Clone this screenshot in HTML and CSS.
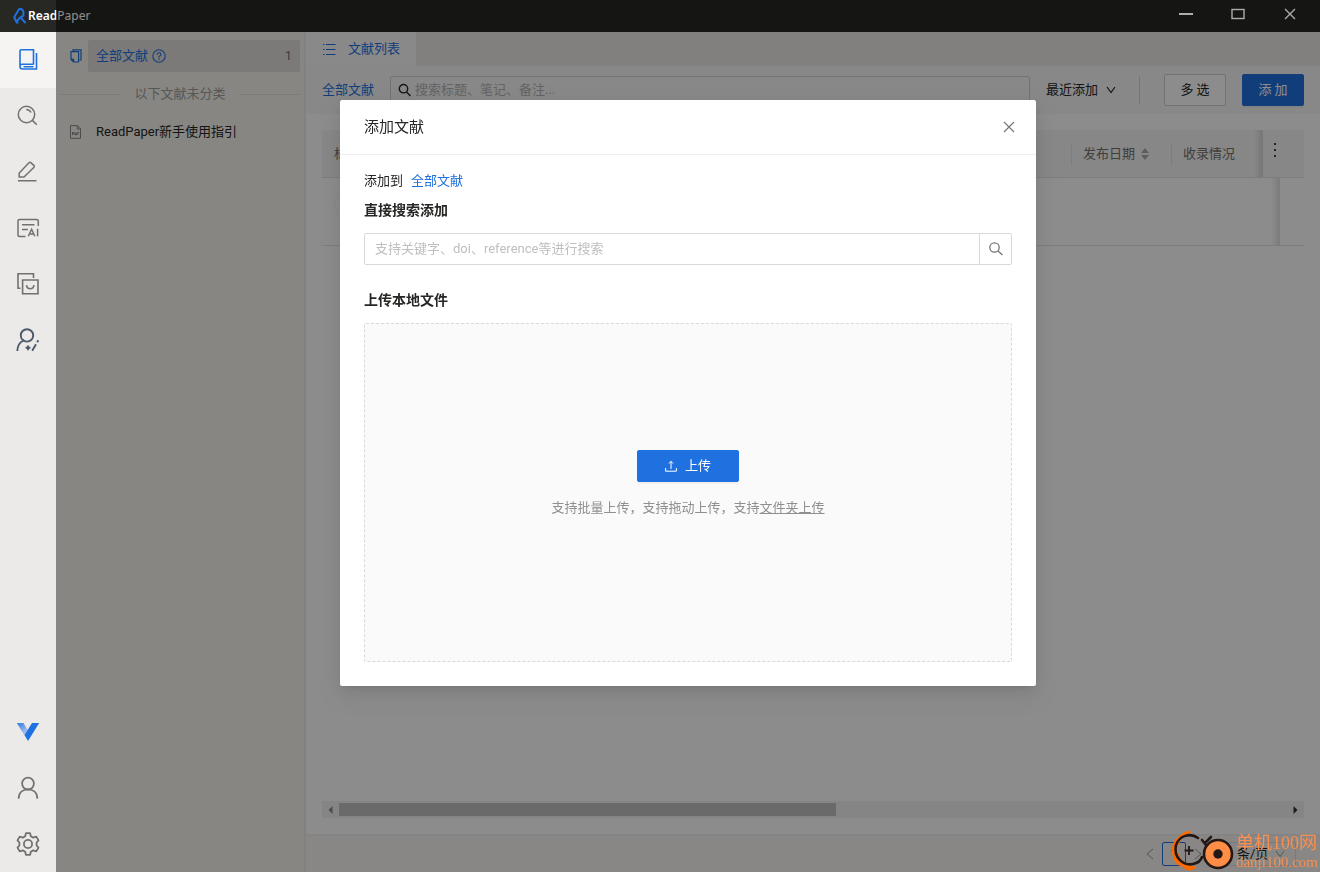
FILE: index.html
```html
<!DOCTYPE html>
<html lang="zh-CN">
<head>
<meta charset="utf-8">
<title>ReadPaper</title>
<link rel="stylesheet" href="styles.css">
</head>
<body>
<div class="app">
  <header class="titlebar">
    <div class="brand">
      <svg class="brand-mark" width="14" height="16" viewBox="0 0 14 16" fill="none" stroke="#1f71e0" stroke-width="2"><path d="M5.500 14.600H3.800L1.200 9.200 5.600 1.800Q7.300.2 9.400 1.800L10.400 3.600V7.600L6.400 10.200 3.800 13.400M6.800 8.600 12.600 15"/></svg>
      <span class="brand-name"><b>Read</b>Paper</span>
    </div>
    <div class="window-controls">
      <button type="button" aria-label="最小化"><svg width="14" height="14" viewBox="0 0 14 14"><path d="M0 7H14" stroke="currentColor" stroke-width="2"/></svg></button>
      <button type="button" aria-label="最大化"><svg width="14" height="14" viewBox="0 0 14 14"><rect x="1" y="2.500" width="12" height="9" fill="none" stroke="currentColor" stroke-width="1.400"/></svg></button>
      <button type="button" aria-label="关闭窗口"><svg width="14" height="14" viewBox="0 0 14 14"><path d="M2 2 12 12M12 2 2 12" stroke="currentColor" stroke-width="1.400"/></svg></button>
    </div>
  </header>

  <div class="workspace">
    <nav class="rail" aria-label="主导航">
      <button type="button" class="rail-item active" aria-label="文献"><svg width="24" height="24" viewBox="0 0 24 24" fill="none" stroke="currentColor" stroke-width="1.600"><path d="M17.500 16.500V1.800H5.200Q4 1.800 4 3V18.500Q4 21 6.500 21H20.500V5M4 18.500Q4 16.300 6.200 16.300H17.500M7.500 18.700H17.500"/></svg></button>
      <button type="button" class="rail-item" aria-label="搜索"><svg width="24" height="24" viewBox="0 0 24 24" fill="none" stroke="currentColor" stroke-width="1.500"><circle cx="10.500" cy="10.500" r="8.200"/><path d="M16.400 16.400 20.800 20.800M10.300 5.600Q13.600 5.700 15 8.500"/></svg></button>
      <button type="button" class="rail-item" aria-label="写作"><svg width="24" height="24" viewBox="0 0 24 24" fill="none" stroke="currentColor" stroke-width="1.500"><path d="M2 20.700H20.500M3.200 17V13L13.200 2.600Q14 1.900 14.800 2.600L18 5.600Q18.700 6.400 18 7.200L8 17Z"/></svg></button>
      <button type="button" class="rail-item" aria-label="AI 笔记"><svg width="24" height="24" viewBox="0 0 24 24" fill="none" stroke="currentColor" stroke-width="1.500"><path d="M9.500 20.500H3.500Q2 20.500 2 19V4.800Q2 3.600 3.500 3.600H20.500Q22.300 3.600 22.300 5V10M6 8.800H18.500M6 13.500H12"/><path d="M12.300 20.200 15.600 13.200 18.800 20.200M13.500 18H18M21.600 12.800V20.200"/></svg></button>
      <button type="button" class="rail-item" aria-label="收藏"><svg width="24" height="24" viewBox="0 0 24 24" fill="none" stroke="currentColor" stroke-width="1.600"><path d="M4.500 16.300H2V1.800H17.500V6M6.600 8H22V21.800H6.600ZM10.500 13.200Q11 16.800 14.200 16.800T18 13.200"/></svg></button>
      <button type="button" class="rail-item dark" aria-label="学者"><svg width="24" height="24" viewBox="0 0 24 24" fill="none" stroke="currentColor" stroke-width="1.900"><circle cx="11" cy="7.400" r="6.200"/><path d="M1.300 23Q1.600 15.200 7.600 12.500M16.200 22.700 20 16.200M21.200 14.200 22.300 12.300M12 17.400V22.200M9.600 19.800H14.400"/></svg></button>
      <span class="rail-gap"></span>
      <button type="button" class="rail-item" aria-label="会员"><svg width="24" height="24" viewBox="0 0 24 24"><defs><linearGradient id="v" x1="0" y1="0" x2=".6" y2="1"><stop offset="0" stop-color="#3079e2"/><stop offset="1" stop-color="#bfd1ee"/></linearGradient></defs><path d="M.8 3H7.500L13 12.500 9.500 17Z" fill="url(#v)"/><path d="M16 3H23.200L12 21 8.500 15Z" fill="#1f71e0"/></svg></button>
      <button type="button" class="rail-item" aria-label="账户"><svg width="24" height="24" viewBox="0 0 24 24" fill="none" stroke="currentColor" stroke-width="1.800"><circle cx="12" cy="7.600" r="5.900"/><path d="M2.600 22.600C2.800 16.300 7 13.300 12 13.300S21.200 16.300 21.400 22.600"/></svg></button>
      <button type="button" class="rail-item" aria-label="设置"><svg width="24" height="24" viewBox="0 0 24 24" fill="none" stroke="currentColor" stroke-width="1.800" stroke-linejoin="round"><path d="M9.900 1.200H14.100L14.800 4.200 17.200 5.600 20.300 4.600 22.500 8.400 20.600 10.500V13.500L22.500 15.600 20.300 19.400 17.200 18.400 14.800 19.800 14.100 22.800H9.900L9.200 19.800 6.800 18.400 3.700 19.400 1.500 15.600 3.400 13.500V10.500L1.500 8.400 3.700 4.600 6.800 5.600 9.200 4.200Z"/><circle cx="12" cy="12" r="4.100"/></svg></button>
    </nav>

    <aside class="folders">
      <div class="folder-row">
        <span class="folder-icon blue"><svg width="14" height="14" viewBox="0 0 14 14" fill="none" stroke="currentColor" stroke-width="1.200"><path d="M4 2.500V.8H12V11H10.500M2 2.600H9.600V13H4.500L2 10.500ZM2 10.300H4.600V13"/></svg></span>
        <button type="button" class="folder-all"><span>全部文献</span><svg width="14" height="14" viewBox="0 0 14 14" fill="none" stroke="currentColor" stroke-width="1.100"><circle cx="7" cy="7" r="6.200"/><path d="M5 5.500Q5 3.700 7 3.700T9 5.500Q9 6.700 7 7.400V8.600M7 9.600V10.900"/></svg><span class="count">1</span></button>
      </div>
      <div class="separator">以下文献未分类</div>
      <div class="folder-row">
        <span class="folder-icon"><svg width="14" height="14" viewBox="0 0 14 14" fill="none" stroke="currentColor"><path d="M1.500.6H8.500L11.500 3.700V13.300H1.500ZM8.300.8V4H11.500M3.500 10V7.500H5V9H3.500M6.200 7.500V10H7.200V7.500M8.800 10V7.500H10.300"/></svg></span>
        <a class="doc-link" href="#">ReadPaper新手使用指引</a>
      </div>
    </aside>

    <main class="library">
      <div class="tabs">
        <button type="button" class="tab"><svg width="14" height="14" viewBox="0 0 14 14" stroke="currentColor"><path d="M4 2.500H13.500M4 7.500H13.500M4 12.500H13.500M1 2.500H2.500M1 7.500H2.500M1 12.500H2.500"/></svg>文献列表</button>
      </div>
      <div class="toolbar">
        <a class="crumb" href="#">全部文献</a>
        <label class="filter"><svg width="14" height="14" viewBox="0 0 14 14" fill="none" stroke="currentColor" stroke-width="1.400"><circle cx="5.500" cy="5.700" r="4.200"/><path d="M8.500 9 12.500 13"/></svg><input type="text" aria-label="搜索文献" placeholder="搜索标题、笔记、备注..."></label>
        <span class="picker sort"><select aria-label="排序"><option>最近添加</option></select><svg width="10" height="10" viewBox="0 0 10 10" fill="none" stroke="currentColor" stroke-width="1.200"><path d="M1 2 5 7.500 9 2"/></svg></span>
        <span class="rule"></span>
        <button type="button" class="btn">多 选</button>
        <button type="button" class="btn primary">添 加</button>
      </div>
      <div class="list">
        <table class="papers">
          <colgroup><col><col class="w-date"><col class="w-index"><col class="w-pin"><col class="w-more"></colgroup>
          <thead><tr>
            <th>标题</th>
            <th class="lined"><span class="sortable">发布日期<svg width="8" height="12" viewBox="0 0 8 12" fill="currentColor"><path d="M4 0 8 5H0ZM0 7H8L4 12Z"/></svg></span></th>
            <th class="lined shade">收录情况</th>
            <th colspan="2" class="more"><button type="button" aria-label="列设置"><svg width="4" height="16" viewBox="0 0 4 16" fill="currentColor"><path d="M1 1H3V3H1ZM1 7H3V9H1ZM1 13H3V15H1Z"/></svg></button></th>
          </tr></thead>
          <tbody><tr><td colspan="4" class="shade"><span class="ring"></span></td><td></td></tr></tbody>
        </table>
        <div class="scrollbar">
          <span class="arrow dim"><svg width="5" height="8" viewBox="0 0 5 8"><path d="M4.500 0V8L.5 4Z" fill="currentColor"/></svg></span>
          <span class="track"><span class="thumb"></span></span>
          <span class="arrow"><svg width="5" height="8" viewBox="0 0 5 8"><path d="M.5 0V8L4.500 4Z" fill="currentColor"/></svg></span>
        </div>
      </div>
      <footer class="pager">
        <button type="button" class="page-step" aria-label="上一页"><svg width="8" height="12" viewBox="0 0 8 12" fill="none" stroke="currentColor"><path d="M7 1 1 6 7 11"/></svg></button>
        <button type="button" class="page-no">1</button>
        <button type="button" class="page-step" aria-label="下一页"><svg width="8" height="12" viewBox="0 0 8 12" fill="none" stroke="currentColor"><path d="M1 1 7 6 1 11"/></svg></button>
        <span class="picker size"><select aria-label="每页数量"><option>条/页</option></select><svg width="10" height="10" viewBox="0 0 10 10" fill="none" stroke="currentColor"><path d="M1 2 5 7.500 9 2"/></svg></span>
      </footer>
    </main>
  </div>

  <div class="mask">
    <section class="dialog" role="dialog" aria-labelledby="dialog-title">
      <header class="dialog-head">
        <h1 id="dialog-title">添加文献</h1>
        <button type="button" class="close" aria-label="关闭"><svg width="12" height="12" viewBox="0 0 12 12"><path d="M1 1 11 11M11 1 1 11" stroke="currentColor" stroke-width="1.200"/></svg></button>
      </header>
      <div class="dialog-body">
        <p class="target">添加到<a href="#">全部文献</a></p>
        <h2><label for="query">直接搜索添加</label></h2>
        <div class="search">
          <input id="query" type="text" placeholder="支持关键字、doi、reference等进行搜索">
          <button type="button" aria-label="搜索"><svg width="16" height="16" viewBox="0 0 16 16" fill="none" stroke="currentColor" stroke-width="1.300"><circle cx="6.500" cy="6.500" r="4.700"/><path d="M10 10 14.500 14"/></svg></button>
        </div>
        <h2>上传本地文件</h2>
        <div class="dropzone">
          <button type="button" class="btn primary upload"><svg width="12" height="12" viewBox="0 0 12 12" fill="none" stroke="currentColor"><path d="M.6 8V11.200H11.400V8M6 9V1.500M4 3.500 6 1.300 8 3.500"/></svg>上传</button>
          <p>支持批量上传，支持拖动上传，支持<a href="#">文件夹上传</a></p>
        </div>
      </div>
    </section>
  </div>

  <div class="watermark">
    <svg width="66" height="44" viewBox="0 0 66 44" fill="none">
      <path d="M22 4Q17 1 12 6 1 13 2 23 3 37 13 39 19 46 27 39 12 37 8 25 6 13 17 7Z" fill="#ff6a00"/>
      <path d="M28 10C20 4 9 8 6 17 3 30 14 38 23 36 28 35 31 32 32 29M32 12 36 17M41 9 36 14" stroke="#231815" stroke-width="2.600" stroke-linecap="round"/>
      <path d="M19 18V27M14.500 22.500H23.500" stroke="#231815" stroke-width="1.800"/>
      <circle cx="48" cy="26" r="14" fill="#ff8d45" stroke="#231815" stroke-width="2.600"/>
      <circle cx="48" cy="26" r="4.700" fill="#231815"/>
    </svg>
    <div class="watermark-text"><span>单机100网</span><span class="domain">danji100.com</span></div>
  </div>
</div>
</body>
</html>
```
FILE: styles.css
```css
:root {
  --blue: #1f71e0;
  --ink: #262625;
  --line: #e4e4e4;
}
* { box-sizing: border-box; }
body {
  margin: 0;
  font: 400 13px/22px Roboto, "Noto Sans CJK SC", sans-serif;
  color: var(--ink);
}
button, input, select { font: inherit; color: inherit; }
button { border: 0; padding: 0; background: none; cursor: pointer; }
a { color: var(--blue); text-decoration: none; }
h1, h2, p { margin: 0; }
svg { display: block; flex: none; }

.app { min-height: 100vh; display: flex; flex-direction: column; }

.titlebar {
  height: 32px;
  display: flex;
  justify-content: space-between;
  background: #272724;
  color: #fff;
}
.brand { display: flex; align-items: center; gap: 1px; padding-left: 13px; }
.brand-name { font: 400 12px/16px "Noto Sans", sans-serif; }
.brand-name b { font-weight: 600; }
.window-controls { display: flex; padding: 0 4px 4px 0; z-index: 3; position: relative; color: #adada9; }
.window-controls button { width: 52px; display: grid; place-items: center; }

.workspace { flex: 1; display: flex; }
.rail { width: 56px; flex: none; display: flex; flex-direction: column; background: #ebeae8; color: #73716f; }
.rail-item { height: 56px; display: grid; place-items: center; }
.rail-item.active { background: #f5f4f2; color: var(--blue); }
.rail-item.dark { color: #4e5969; }
.rail-gap { flex: 1; }

.folders {
  width: 250px;
  flex: none;
  padding: 8px 4px;
  background: #f7f4ef;
  border-right: 2px solid #eeebe7;
}
.folder-row { display: flex; align-items: center; height: 32px; }
.folder-icon { width: 28px; padding-left: 9px; color: #8b8987; }
.folder-icon.blue { color: var(--blue); }
.folder-all {
  flex: 1;
  height: 32px;
  display: flex;
  align-items: center;
  gap: 4px;
  padding: 0 8px;
  border-radius: 2px;
  background: #e1dfdb;
  color: var(--blue);
}
.count { margin-left: auto; color: #73716f; }
.doc-link { padding-left: 8px; color: var(--ink); }
.separator { display: flex; align-items: center; gap: 14px; height: 44px; color: #a09e9b; }
.separator::before, .separator::after { content: ""; flex: 1; border-top: 1px solid #e4e1dc; }

.library { flex: 1; min-width: 0; display: flex; flex-direction: column; background: #fff; }
.tabs { height: 34px; display: flex; background: #edeae6; }
.tab {
  display: flex;
  align-items: center;
  gap: 12px;
  padding: 0 16px;
  background: #f9fafb;
  color: var(--blue);
}
.toolbar { height: 48px; display: flex; align-items: center; gap: 16px; padding: 0 16px; background: #f7f8f8; }
.filter {
  flex: 1;
  height: 28px;
  display: flex;
  align-items: center;
  gap: 3px;
  padding: 0 7px;
  border: 1px solid #d0d0d0;
  border-radius: 2px;
}
.filter input { flex: 1; min-width: 0; border: 0; padding: 0; background: none; }
input { outline: 0; }
.filter input::placeholder { color: #b4b4b4; opacity: 1; }
.picker { display: flex; align-items: center; }
.picker select { appearance: none; border: 0; padding: 0; background: none; }
.sort { gap: 7px; width: 77px; }
.rule { width: 1px; height: 28px; margin-right: 8px; background: #d8d8d8; }
.btn {
  width: 62px;
  height: 32px;
  border: 1px solid #d0d0d0;
  border-radius: 2px;
  background: #fff;
}
.btn.primary { border-color: var(--blue); background: var(--blue); color: #fff; box-shadow: 0 2px 0 rgba(0, 0, 0, .04); }

.list { flex: 1; display: flex; flex-direction: column; justify-content: space-between; padding: 16px; }
.papers { width: 100%; table-layout: fixed; border-collapse: separate; border-spacing: 0; }
.w-date { width: 100px; }
.w-index { width: 92px; }
.w-pin { width: 17px; }
.w-more { width: 24px; }
.papers th {
  height: 48px;
  padding: 0 12px;
  background: #f6f6f6;
  border-bottom: 1px solid var(--line);
  color: #73716f;
  font-weight: 400;
  text-align: left;
}
.papers td { height: 68px; padding: 12px; border-bottom: 1px solid var(--line); vertical-align: top; }
.papers .lined {
  background-image: linear-gradient(var(--line), var(--line));
  background-size: 1px 22px;
  background-position: left center;
  background-repeat: no-repeat;
}
.papers .shade {
  background-image: linear-gradient(to left, rgba(0, 0, 0, .12), transparent);
  background-size: 9px 100%;
  background-position: right center;
  background-repeat: no-repeat;
}
.papers .lined.shade {
  background-image: linear-gradient(var(--line), var(--line)), linear-gradient(to left, rgba(0, 0, 0, .12), transparent);
  background-size: 1px 22px, 9px 100%;
  background-position: left center, right center;
}
.sortable { display: flex; align-items: center; gap: 6px; }
.sortable svg { color: #aaa; }
.papers .more { padding: 0 10px; color: #444; }
.ring { display: block; width: 28px; height: 28px; border: 1px solid #f2f2f2; border-radius: 50%; }

.scrollbar { height: 17px; display: flex; background: #f3f3f3; }
.arrow { width: 17px; display: grid; place-items: center; color: #333; }
.arrow.dim { color: #8a8a8a; }
.track { flex: 1; padding: 2px 0; }
.thumb { display: block; width: 52.4%; height: 13px; background: #c1c1c1; }

.pager {
  height: 38px;
  display: flex;
  align-items: center;
  justify-content: flex-end;
  padding-right: 24px;
  border-top: 2px solid #f0f0f0;
  background: #f7f6f3;
  color: #9a9a9a;
}
.page-step { width: 24px; height: 24px; display: grid; place-items: center; }
.page-no { width: 24px; height: 24px; border: 1px solid var(--blue); border-radius: 2px; color: var(--blue); }
.size { width: 86px; height: 24px; justify-content: flex-end; gap: 6px; padding-right: 10px; border: 1px solid #dcdcdc; border-radius: 2px; }
.size select { color: var(--ink); }

.mask {
  position: fixed;
  inset: 0 0 0 56px;
  z-index: 2;
  display: flex;
  justify-content: center;
  align-items: flex-start;
  padding: 100px 24px 24px;
  background: rgba(0, 0, 0, .45);
}
.dialog {
  width: 696px;
  max-width: 100%;
  border-radius: 2px;
  background: #fff;
  box-shadow: 0 3px 6px -4px rgba(0, 0, 0, .12), 0 6px 16px rgba(0, 0, 0, .08), 0 9px 28px 8px rgba(0, 0, 0, .05);
}
.dialog-head {
  height: 55px;
  display: flex;
  align-items: center;
  justify-content: space-between;
  padding: 0 20px 0 24px;
  border-bottom: 1px solid #eee;
}
.dialog-head h1 { font-size: 15px; font-weight: 400; line-height: 24px; }
.close { padding: 1px; color: #777; }
.dialog-body { padding: 15px 24px 24px; }
.target { display: flex; gap: 8px; margin-bottom: 7px; }
.dialog h2 { margin-bottom: 12px; font-size: 14px; font-weight: 700; line-height: 22px; }
.search { display: flex; height: 32px; margin-bottom: 24px; border: 1px solid #d9d9d9; border-radius: 2px; }
.search input { flex: 1; min-width: 0; padding: 0 10px; border: 0; background: none; }
.search input::placeholder { color: #bfbfbf; opacity: 1; }
.search button { width: 32px; display: grid; place-items: center; border-left: 1px solid #d9d9d9; color: #777; }
.dropzone {
  height: 339px;
  display: flex;
  flex-direction: column;
  align-items: center;
  justify-content: center;
  gap: 15px;
  padding-bottom: 16px;
  border: 1px dashed #d9d9d9;
  border-radius: 2px;
  background: #fafafa;
  color: #8f8f8f;
}
.dropzone a { color: inherit; text-decoration: underline; }
.upload { width: 102px; display: flex; align-items: center; justify-content: center; gap: 8px; }

.watermark { position: fixed; right: 2px; bottom: 0; z-index: 4; display: flex; color: #f98f50; }
.watermark-text { display: flex; flex-direction: column; padding-top: 4px; font: 400 18px/22px "Liberation Serif", "Noto Sans CJK SC", serif; }
.watermark-text .domain { font-size: 15px; line-height: 16px; }
```
